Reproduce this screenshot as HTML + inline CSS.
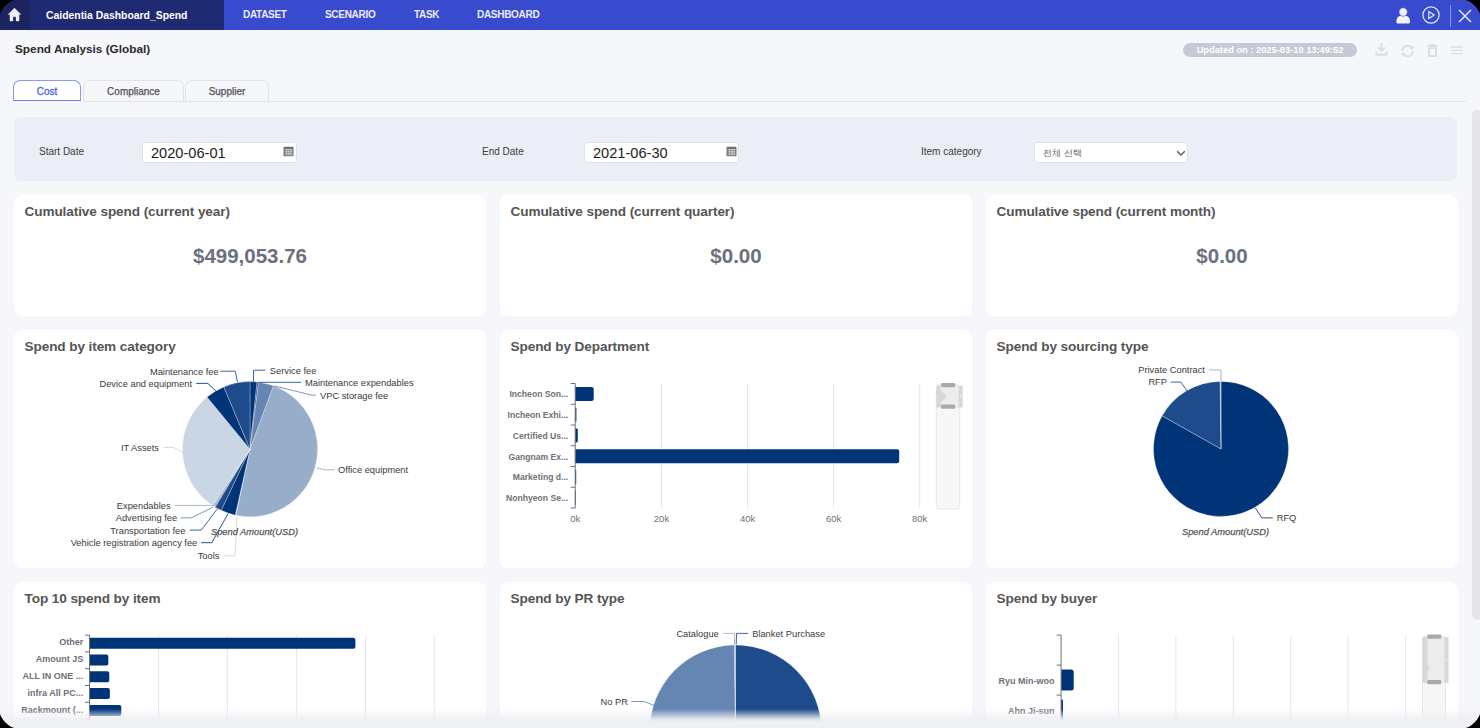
<!DOCTYPE html>
<html><head><meta charset="utf-8">
<style>
*{box-sizing:border-box;margin:0;padding:0}
html,body{width:1480px;height:728px;overflow:hidden;background:#000}
body{font-family:"Liberation Sans",sans-serif}
#app{position:absolute;left:0;top:0;width:1480px;height:728px;overflow:hidden;background:#f6f7fb}
.abs{position:absolute;white-space:nowrap}
#nav{position:absolute;left:0;top:0;width:1480px;height:30px;background:#384bcf}
#navdark{position:absolute;left:0;top:0;width:224px;height:30px;background:#1f2a72}
#navhome{position:absolute;left:0;top:0;width:30px;height:30px;background:#1b2360}
.navi{position:absolute;top:8px;color:#e9ecfb;font-weight:700;font-size:10px;line-height:14px;letter-spacing:-0.3px}
.card{position:absolute;background:#fff;border-radius:8px}
.ctitle{position:absolute;left:10.5px;top:8.5px;font-size:13.6px;letter-spacing:-0.1px;font-weight:700;color:#555;line-height:16px;white-space:nowrap}
.kpi{position:absolute;left:0;width:472px;top:48.5px;text-align:center;font-size:20.5px;font-weight:700;color:#6b707c;line-height:24px}
.tab{position:absolute;top:80px;height:21px;border:1px solid #e2e4ea;border-bottom:none;border-radius:7px 7px 0 0;font-size:10px;color:#505050;text-align:center;line-height:22px;-webkit-text-stroke:0.25px #505050}
.flabel{position:absolute;top:146px;font-size:10px;color:#3c3c3c;line-height:12px}
.finput{position:absolute;top:142px;height:21px;width:155px;background:#fff;border:1px solid #dfe2ea;border-radius:3px}
.fval{position:absolute;left:8px;top:2px;font-size:14.6px;color:#1c1c1c;line-height:17px}
</style></head>
<body>
<div id="app">
  <div id="nav">
    <div id="navdark"></div>
    <div id="navhome"></div>
    <svg class="abs" style="left:0;top:0" width="30" height="30" viewBox="0 0 30 30"><path d="M14.5 8.1 L21 14.6 L19.1 14.6 L19.1 21.1 L16 21.1 L16 16.8 L13 16.8 L13 21.1 L9.9 21.1 L9.9 14.6 L8 14.6 Z" fill="#eeeef3" stroke="#eeeef3" stroke-width="0.3" stroke-linejoin="round"/></svg>
    <div class="abs" style="left:46px;top:9px;color:#fff;font-weight:700;font-size:10.4px;line-height:14px">Caidentia Dashboard_Spend</div>
    <div class="navi" style="left:243px">DATASET</div>
    <div class="navi" style="left:325px">SCENARIO</div>
    <div class="navi" style="left:414px">TASK</div>
    <div class="navi" style="left:477px">DASHBOARD</div>
  </div>
  <div class="abs" style="left:15px;top:42px;font-size:11.8px;font-weight:700;color:#2a2a2a;line-height:15px">Spend Analysis (Global)</div>

  <!-- right nav icons -->
  <svg class="abs" style="left:1396px;top:7px" width="15" height="17" viewBox="0 0 15 17"><path d="M0.4 14.2 C0.4 10.4 3 8.2 7.2 8.2 C11.4 8.2 14 10.4 14 14.2 L14 15 Q14 16.5 12.5 16.5 L1.9 16.5 Q0.4 16.5 0.4 15 Z" fill="#f3f3f7"/><circle cx="7.2" cy="5" r="4.2" fill="#f3f3f7" stroke="#384bcf" stroke-width="0.6"/></svg>
  <svg class="abs" style="left:1422px;top:6px" width="18" height="18" viewBox="0 0 18 18"><circle cx="9" cy="9" r="8.1" fill="none" stroke="#e8eaf8" stroke-width="1.2"/><path d="M6.8 5.4 L12.2 9 L6.8 12.6 Z" fill="none" stroke="#e8eaf8" stroke-width="1.2" stroke-linejoin="round"/></svg>
  <div class="abs" style="left:1450px;top:5px;width:1px;height:22px;background:#8f9be3"></div>
  <svg class="abs" style="left:1458px;top:9px" width="14" height="14" viewBox="0 0 14 14"><path d="M1 1 L13 13 M13 1 L1 13" stroke="#f3f3f8" stroke-width="1.4"/></svg>
  <!-- updated pill -->
  <div class="abs" style="left:1183px;top:43px;width:174px;height:14px;border-radius:7px;background:#c6cad4;color:#fff;font-size:9.3px;font-weight:700;line-height:14px;text-align:center">Updated on : 2025-03-10 13:49:52</div>
  <!-- toolbar icons -->
  <svg class="abs" style="left:1374px;top:42px" width="15" height="15" viewBox="0 0 15 15" fill="none" stroke="#dadde4" stroke-width="2" stroke-linecap="round" stroke-linejoin="round"><path d="M7.5 2 L7.5 8.5 M4.6 6 L7.5 8.9 L10.4 6"/><path d="M2.3 10.2 L2.3 12 Q2.3 12.8 3.1 12.8 L11.9 12.8 Q12.7 12.8 12.7 12 L12.7 10.2"/></svg>
  <svg class="abs" style="left:1400px;top:44px" width="15" height="14" viewBox="0 0 15 14" fill="none" stroke="#dadde4" stroke-width="2"><path d="M2.4 7 A5 5 0 0 1 11.2 3.6 M12.6 7 A5 5 0 0 1 3.8 10.4"/><path d="M13.6 1.2 L13.3 5.6 L9 5 Z M1.4 12.8 L1.7 8.4 L6 9 Z" fill="#dadde4" stroke="none"/></svg>
  <svg class="abs" style="left:1427px;top:44px" width="11" height="13" viewBox="0 0 11 13"><rect x="0.3" y="1" width="10.4" height="1.8" rx="0.5" fill="#dadde4"/><rect x="3.5" y="0" width="4" height="1.4" fill="#dadde4"/><rect x="2" y="4.2" width="7" height="7.8" fill="none" stroke="#dadde4" stroke-width="2"/></svg>
  <svg class="abs" style="left:1451px;top:45px" width="13" height="10" viewBox="0 0 13 10" stroke="#dadde4" stroke-width="1.3"><path d="M0 2 H12 M0 5.3 H12 M0 8.6 H12"/></svg>
  <!-- tabs -->
  <div class="abs" style="left:83px;top:101px;width:1383px;height:1px;background:#e3e5ea"></div>
  <div class="tab" style="left:13px;width:68px;border:1px solid #8a9ae8;border-bottom:1.5px solid #6c80e6;background:#fff;color:#4c63e0;-webkit-text-stroke:0.3px #4c63e0;height:21px;line-height:21px">Cost</div>
  <div class="tab" style="left:83px;width:101px">Compliance</div>
  <div class="tab" style="left:185px;width:84px">Supplier</div>
  <!-- scrollbar -->
  <div class="abs" style="left:1472px;top:110px;width:10px;height:510px;border-radius:5px;background:#e6e6e8"></div>
  <!-- filter panel -->
  <div class="abs" style="left:14px;top:117px;width:1443px;height:64px;border-radius:7px;background:#ebeef7"></div>
  <div class="flabel" style="left:39px">Start Date</div>
  <div class="finput" style="left:142px"><div class="fval">2020-06-01</div>
    <svg class="abs" style="left:140px;top:3px" width="11" height="11" viewBox="0 0 11 11"><rect x="0.5" y="0.8" width="10" height="9.5" rx="1" fill="#6f7075"/><path d="M1.5 3.6 H9.5 M1.5 5.8 H9.5 M1.5 8 H9.5 M3.7 3 V9.6 M5.9 3 V9.6 M8 3 V9.6" stroke="#e8e8ec" stroke-width="0.7"/></svg></div>
  <div class="flabel" style="left:482px">End Date</div>
  <div class="finput" style="left:584px"><div class="fval">2021-06-30</div>
    <svg class="abs" style="left:141px;top:3px" width="11" height="11" viewBox="0 0 11 11"><rect x="0.5" y="0.8" width="10" height="9.5" rx="1" fill="#6f7075"/><path d="M1.5 3.6 H9.5 M1.5 5.8 H9.5 M1.5 8 H9.5 M3.7 3 V9.6 M5.9 3 V9.6 M8 3 V9.6" stroke="#e8e8ec" stroke-width="0.7"/></svg></div>
  <div class="flabel" style="left:921px">Item category</div>
  <div class="finput" style="left:1034px;width:154px;height:21px"><div class="abs" style="left:8px;top:3.5px;font-size:9.2px;color:#666;line-height:12px">전체 선택</div>
    <svg class="abs" style="left:141px;top:6px" width="10" height="8" viewBox="0 0 10 8"><path d="M1.2 2.2 L5 6 L8.8 2.2" fill="none" stroke="#555" stroke-width="1.3"/></svg></div>
  <!-- KPI cards -->
  <div class="card" style="left:14px;top:195px;width:472px;height:121px"><div class="ctitle">Cumulative spend (current year)</div><div class="kpi">$499,053.76</div></div>
  <div class="card" style="left:500px;top:195px;width:472px;height:121px"><div class="ctitle">Cumulative spend (current quarter)</div><div class="kpi">$0.00</div></div>
  <div class="card" style="left:986px;top:195px;width:472px;height:121px"><div class="ctitle">Cumulative spend (current month)</div><div class="kpi">$0.00</div></div>
  <!-- chart cards -->
  <div class="card" id="c1" style="left:14px;top:330px;width:472px;height:238px"><div class="ctitle">Spend by item category</div></div>
  <div class="card" id="c2" style="left:500px;top:330px;width:472px;height:238px"><div class="ctitle">Spend by Department</div></div>
  <div class="card" id="c3" style="left:986px;top:330px;width:472px;height:238px"><div class="ctitle">Spend by sourcing type</div></div>
  <div class="card" id="c4" style="left:14px;top:582px;width:472px;height:238px"><div class="ctitle">Top 10 spend by item</div></div>
  <div class="card" id="c5" style="left:500px;top:582px;width:472px;height:238px"><div class="ctitle">Spend by PR type</div></div>
  <div class="card" id="c6" style="left:986px;top:582px;width:472px;height:238px"><div class="ctitle">Spend by buyer</div></div>
  <!--CHARTS--><svg class="abs" style="left:0;top:0" width="1480" height="728" viewBox="0 0 1480 728" font-family="Liberation Sans, sans-serif">
<path d="M250,449.2 L250.00,381.60 A67.6,67.6 0 0 1 257.07,381.97 Z" fill="#003478" stroke="#fff" stroke-width="0.35" stroke-opacity="0.8" stroke-linejoin="round"/>
<path d="M250,449.2 L257.07,381.97 A67.6,67.6 0 0 1 258.59,382.15 Z" fill="#1d4b8b" stroke="#fff" stroke-width="0.35" stroke-opacity="0.8" stroke-linejoin="round"/>
<path d="M250,449.2 L258.59,382.15 A67.6,67.6 0 0 1 273.56,385.84 Z" fill="#6585b2" stroke="#fff" stroke-width="0.35" stroke-opacity="0.8" stroke-linejoin="round"/>
<path d="M250,449.2 L273.56,385.84 A67.6,67.6 0 0 1 235.83,515.30 Z" fill="#97adc9" stroke="#fff" stroke-width="0.35" stroke-opacity="0.8" stroke-linejoin="round"/>
<path d="M250,449.2 L235.83,515.30 A67.6,67.6 0 0 1 235.25,515.17 Z" fill="#cbd6e4" stroke="#fff" stroke-width="0.35" stroke-opacity="0.8" stroke-linejoin="round"/>
<path d="M250,449.2 L235.25,515.17 A67.6,67.6 0 0 1 221.22,510.37 Z" fill="#003478" stroke="#fff" stroke-width="0.35" stroke-opacity="0.8" stroke-linejoin="round"/>
<path d="M250,449.2 L221.22,510.37 A67.6,67.6 0 0 1 215.18,507.14 Z" fill="#1d4b8b" stroke="#fff" stroke-width="0.35" stroke-opacity="0.8" stroke-linejoin="round"/>
<path d="M250,449.2 L215.18,507.14 A67.6,67.6 0 0 1 214.18,506.53 Z" fill="#6585b2" stroke="#fff" stroke-width="0.35" stroke-opacity="0.8" stroke-linejoin="round"/>
<path d="M250,449.2 L214.18,506.53 A67.6,67.6 0 0 1 212.69,505.57 Z" fill="#97adc9" stroke="#fff" stroke-width="0.35" stroke-opacity="0.8" stroke-linejoin="round"/>
<path d="M250,449.2 L212.69,505.57 A67.6,67.6 0 0 1 207.00,397.04 Z" fill="#cbd6e4" stroke="#fff" stroke-width="0.35" stroke-opacity="0.8" stroke-linejoin="round"/>
<path d="M250,449.2 L207.00,397.04 A67.6,67.6 0 0 1 223.80,386.88 Z" fill="#003478" stroke="#fff" stroke-width="0.35" stroke-opacity="0.8" stroke-linejoin="round"/>
<path d="M250,449.2 L223.80,386.88 A67.6,67.6 0 0 1 250.00,381.60 Z" fill="#1d4b8b" stroke="#fff" stroke-width="0.35" stroke-opacity="0.8" stroke-linejoin="round"/>
<path d="M253.5,381.5 L253.5,370.2 L265.3,370.2" fill="none" stroke="#1d4b8b" stroke-width="1" stroke-opacity="0.85"/>
<text x="269.8" y="370.7" font-size="9.3" fill="#3a3a3a" font-weight="400" text-anchor="start" dominant-baseline="central" >Service fee</text>
<path d="M258,382.3 L301,382.3" fill="none" stroke="#1d4b8b" stroke-width="1" stroke-opacity="0.85"/>
<text x="305" y="382.8" font-size="9.3" fill="#3a3a3a" font-weight="400" text-anchor="start" dominant-baseline="central" >Maintenance expendables</text>
<path d="M274,385.8 L312,395.2 L315.8,395.2" fill="none" stroke="#6585b2" stroke-width="1" stroke-opacity="0.85"/>
<text x="320" y="395.7" font-size="9.3" fill="#3a3a3a" font-weight="400" text-anchor="start" dominant-baseline="central" >VPC storage fee</text>
<path d="M316.6,467.8 L324.9,469.8 L334.8,469.8" fill="none" stroke="#97adc9" stroke-width="1" stroke-opacity="0.85"/>
<text x="338" y="470.3" font-size="9.3" fill="#3a3a3a" font-weight="400" text-anchor="start" dominant-baseline="central" >Office equipment</text>
<path d="M236.8,516.3 L235.2,555.8 L223.6,555.8" fill="none" stroke="#cbd6e4" stroke-width="1" stroke-opacity="0.85"/>
<text x="219.4" y="556.3" font-size="9.3" fill="#3a3a3a" font-weight="400" text-anchor="end" dominant-baseline="central" >Tools</text>
<path d="M228,513.7 L211.8,542.7 L201.2,542.7" fill="none" stroke="#003478" stroke-width="1" stroke-opacity="0.85"/>
<text x="197.3" y="543.2" font-size="9.3" fill="#3a3a3a" font-weight="400" text-anchor="end" dominant-baseline="central" >Vehicle registration agency fee</text>
<path d="M217.2,509 L201.2,530.1 L189.7,530.1" fill="none" stroke="#1d4b8b" stroke-width="1" stroke-opacity="0.85"/>
<text x="185.4" y="530.6" font-size="9.3" fill="#3a3a3a" font-weight="400" text-anchor="end" dominant-baseline="central" >Transportation fee</text>
<path d="M213.5,506.9 L191.3,517.9 L180.8,517.9" fill="none" stroke="#6585b2" stroke-width="1" stroke-opacity="0.85"/>
<text x="177.2" y="518.4" font-size="9.3" fill="#3a3a3a" font-weight="400" text-anchor="end" dominant-baseline="central" >Advertising fee</text>
<path d="M212.9,505.4 L174.9,505.4" fill="none" stroke="#97adc9" stroke-width="1" stroke-opacity="0.85"/>
<text x="170.6" y="505.9" font-size="9.3" fill="#3a3a3a" font-weight="400" text-anchor="end" dominant-baseline="central" >Expendables</text>
<path d="M183,452.6 L173.2,447.4 L163.3,447.4" fill="none" stroke="#cbd6e4" stroke-width="1" stroke-opacity="0.85"/>
<text x="159" y="447.9" font-size="9.3" fill="#3a3a3a" font-weight="400" text-anchor="end" dominant-baseline="central" >IT Assets</text>
<path d="M216,391 L207.8,383.4 L196.3,383.4" fill="none" stroke="#003478" stroke-width="1" stroke-opacity="0.85"/>
<text x="192" y="383.9" font-size="9.3" fill="#3a3a3a" font-weight="400" text-anchor="end" dominant-baseline="central" >Device and equipment</text>
<path d="M237.5,381.8 L235.2,371.2 L220.3,371.2" fill="none" stroke="#1d4b8b" stroke-width="1" stroke-opacity="0.85"/>
<text x="218.7" y="371.7" font-size="9.3" fill="#3a3a3a" font-weight="400" text-anchor="end" dominant-baseline="central" >Maintenance fee</text>
<text x="254.5" y="532.4" font-size="9.3" fill="#555" font-weight="400" text-anchor="middle" dominant-baseline="central" font-style="italic" stroke="#555" stroke-width="0.25">Spend Amount(USD)</text>
<path d="M1221,448.9 L1221.00,381.40 A67.5,67.5 0 1 1 1162.14,415.87 Z" fill="#003478" stroke="#fff" stroke-width="0.35" stroke-opacity="0.8" stroke-linejoin="round"/>
<path d="M1221,448.9 L1162.14,415.87 A67.5,67.5 0 0 1 1220.18,381.41 Z" fill="#1d4b8b" stroke="#fff" stroke-width="0.35" stroke-opacity="0.8" stroke-linejoin="round"/>
<path d="M1221,448.9 L1220.18,381.41 A67.5,67.5 0 0 1 1221.00,381.40 Z" fill="#97adc9" stroke="#fff" stroke-width="0.35" stroke-opacity="0.8" stroke-linejoin="round"/>
<path d="M1221,381 L1221,369.9 L1209.1,369.9" fill="none" stroke="#97adc9" stroke-width="1" stroke-opacity="0.85"/>
<text x="1204.9" y="369.9" font-size="9.3" fill="#3a3a3a" font-weight="400" text-anchor="end" dominant-baseline="central" >Private Contract</text>
<path d="M1187,391 L1181,382.1 L1170.6,382.1" fill="none" stroke="#1d4b8b" stroke-width="1" stroke-opacity="0.85"/>
<text x="1167" y="382.1" font-size="9.3" fill="#3a3a3a" font-weight="400" text-anchor="end" dominant-baseline="central" >RFP</text>
<path d="M1255.3,508 L1261.9,517.9 L1272.8,517.9" fill="none" stroke="#003478" stroke-width="1" stroke-opacity="0.85"/>
<text x="1276.7" y="517.9" font-size="9.3" fill="#3a3a3a" font-weight="400" text-anchor="start" dominant-baseline="central" >RFQ</text>
<text x="1225.5" y="532.4" font-size="9.3" fill="#555" font-weight="400" text-anchor="middle" dominant-baseline="central" font-style="italic" stroke="#555" stroke-width="0.25">Spend Amount(USD)</text>
<path d="M735.5,731 L735.50,645.00 A86,86 0 0 1 735.50,817.00 Z" fill="#1d4b8b" stroke="#fff" stroke-width="0.35" stroke-opacity="0.8" stroke-linejoin="round"/>
<path d="M735.5,731 L735.50,817.00 A86,86 0 0 1 734.30,645.01 Z" fill="#6585b2" stroke="#fff" stroke-width="0.35" stroke-opacity="0.8" stroke-linejoin="round"/>
<path d="M735.5,731 L734.30,645.01 A86,86 0 0 1 735.50,645.00 Z" fill="#97adc9" stroke="#fff" stroke-width="0.35" stroke-opacity="0.8" stroke-linejoin="round"/>
<path d="M734.6,644.6 L734.4,633.4 L723,633.4" fill="none" stroke="#97adc9" stroke-width="1" stroke-opacity="0.85"/>
<text x="718.8" y="634.1" font-size="9.3" fill="#3a3a3a" font-weight="400" text-anchor="end" dominant-baseline="central" >Catalogue</text>
<path d="M736.2,644.6 L736.6,633.4 L748,633.4" fill="none" stroke="#1d4b8b" stroke-width="1" stroke-opacity="0.85"/>
<text x="752.2" y="634.1" font-size="9.3" fill="#3a3a3a" font-weight="400" text-anchor="start" dominant-baseline="central" >Blanket Purchase</text>
<path d="M653.9,705.4 L644.2,701.5 L631.2,701.5" fill="none" stroke="#6585b2" stroke-width="1" stroke-opacity="0.85"/>
<text x="627.9" y="702.2" font-size="9.3" fill="#3a3a3a" font-weight="400" text-anchor="end" dominant-baseline="central" >No PR</text>
<line x1="661.5" y1="383.5" x2="661.5" y2="508" stroke="#e0e6f1" stroke-width="1"/>
<line x1="747.6" y1="383.5" x2="747.6" y2="508" stroke="#e0e6f1" stroke-width="1"/>
<line x1="833.6" y1="383.5" x2="833.6" y2="508" stroke="#e0e6f1" stroke-width="1"/>
<line x1="919.7" y1="383.5" x2="919.7" y2="508" stroke="#e0e6f1" stroke-width="1"/>
<path d="M575.2,386.875 H591.7 Q593.7,386.875 593.7,388.875 V398.875 Q593.7,400.875 591.7,400.875 H575.2 Z" fill="#003478"/>
<text x="568.2" y="394.475" font-size="8.6" fill="#6e7079" font-weight="700" text-anchor="end" dominant-baseline="central" >Incheon Son...</text>
<path d="M575.2,407.625 H575.8 Q576.4,407.625 576.4,408.22499999999997 V421.02500000000003 Q576.4,421.625 575.8,421.625 H575.2 Z" fill="#003478"/>
<text x="568.2" y="415.225" font-size="8.6" fill="#6e7079" font-weight="700" text-anchor="end" dominant-baseline="central" >Incheon Exhi...</text>
<path d="M575.2,428.375 H576.5 Q577.8,428.375 577.8,429.67499999999995 V441.07500000000005 Q577.8,442.375 576.5,442.375 H575.2 Z" fill="#003478"/>
<text x="568.2" y="435.975" font-size="8.6" fill="#6e7079" font-weight="700" text-anchor="end" dominant-baseline="central" >Certified Us...</text>
<path d="M575.2,449.125 H897.2 Q899.2,449.125 899.2,451.125 V461.125 Q899.2,463.125 897.2,463.125 H575.2 Z" fill="#003478"/>
<text x="568.2" y="456.725" font-size="8.6" fill="#6e7079" font-weight="700" text-anchor="end" dominant-baseline="central" >Gangnam Ex...</text>
<path d="M575.2,469.875 H575.7 Q576.2,469.875 576.2,470.375 V483.375 Q576.2,483.875 575.7,483.875 H575.2 Z" fill="#003478"/>
<text x="568.2" y="477.475" font-size="8.6" fill="#6e7079" font-weight="700" text-anchor="end" dominant-baseline="central" >Marketing d...</text>
<path d="M575.2,490.625 H575.55 Q575.9,490.625 575.9,490.97499999999997 V504.27500000000003 Q575.9,504.625 575.55,504.625 H575.2 Z" fill="#003478"/>
<text x="568.2" y="498.225" font-size="8.6" fill="#6e7079" font-weight="700" text-anchor="end" dominant-baseline="central" >Nonhyeon Se...</text>
<line x1="575.2" y1="383.5" x2="575.2" y2="508" stroke="#6e7079" stroke-width="1"/>
<line x1="570.7" y1="383.5" x2="575.2" y2="383.5" stroke="#6e7079" stroke-width="1"/>
<line x1="570.7" y1="404.25" x2="575.2" y2="404.25" stroke="#6e7079" stroke-width="1"/>
<line x1="570.7" y1="425.0" x2="575.2" y2="425.0" stroke="#6e7079" stroke-width="1"/>
<line x1="570.7" y1="445.75" x2="575.2" y2="445.75" stroke="#6e7079" stroke-width="1"/>
<line x1="570.7" y1="466.5" x2="575.2" y2="466.5" stroke="#6e7079" stroke-width="1"/>
<line x1="570.7" y1="487.25" x2="575.2" y2="487.25" stroke="#6e7079" stroke-width="1"/>
<line x1="570.7" y1="508.0" x2="575.2" y2="508.0" stroke="#6e7079" stroke-width="1"/>
<text x="575.2" y="518.2" font-size="9.5" fill="#6e7079" font-weight="400" text-anchor="middle" dominant-baseline="central" >0k</text>
<text x="661.5" y="518.2" font-size="9.5" fill="#6e7079" font-weight="400" text-anchor="middle" dominant-baseline="central" >20k</text>
<text x="747.6" y="518.2" font-size="9.5" fill="#6e7079" font-weight="400" text-anchor="middle" dominant-baseline="central" >40k</text>
<text x="833.6" y="518.2" font-size="9.5" fill="#6e7079" font-weight="400" text-anchor="middle" dominant-baseline="central" >60k</text>
<text x="919.7" y="518.2" font-size="9.5" fill="#6e7079" font-weight="400" text-anchor="middle" dominant-baseline="central" >80k</text>
<rect x="936.3" y="384.5" width="23.4" height="124.5" rx="3" fill="#f7f7f7" stroke="#e2e2e2" stroke-width="0.8"/>
<rect x="936.3" y="385.5" width="26.4" height="22" fill="#d7d7d7"/>
<path d="M940.8,385.5 H958.6999999999999 V407.5 H940.8 L940.8,402.5 L946.8,396.5 L940.8,390.5 Z" fill="#ececec"/>
<circle cx="960.6999999999999" cy="395.5" r="0.5" fill="#fff"/><circle cx="960.6999999999999" cy="397.5" r="0.5" fill="#fff"/>
<rect x="941.0999999999999" y="383.1" width="14" height="4.2" rx="1.2" fill="#a9a9a9"/>
<rect x="941.0999999999999" y="404.5" width="14" height="4.2" rx="1.2" fill="#a9a9a9"/>
<line x1="158.6" y1="635.1" x2="158.6" y2="728" stroke="#e0e6f1" stroke-width="1"/>
<line x1="227.3" y1="635.1" x2="227.3" y2="728" stroke="#e0e6f1" stroke-width="1"/>
<line x1="296.4" y1="635.1" x2="296.4" y2="728" stroke="#e0e6f1" stroke-width="1"/>
<line x1="365.5" y1="635.1" x2="365.5" y2="728" stroke="#e0e6f1" stroke-width="1"/>
<line x1="434.3" y1="635.1" x2="434.3" y2="728" stroke="#e0e6f1" stroke-width="1"/>
<path d="M89.5,637.7 H353.4 Q355.4,637.7 355.4,639.7 V646.7 Q355.4,648.7 353.4,648.7 H89.5 Z" fill="#003478"/>
<text x="83.3" y="642.3000000000001" font-size="9" fill="#6e7079" font-weight="700" text-anchor="end" dominant-baseline="central" >Other</text>
<path d="M89.5,654.5000000000001 H106.3 Q108.3,654.5000000000001 108.3,656.5000000000001 V663.5000000000001 Q108.3,665.5000000000001 106.3,665.5000000000001 H89.5 Z" fill="#003478"/>
<text x="83.3" y="659.1000000000001" font-size="9" fill="#6e7079" font-weight="700" text-anchor="end" dominant-baseline="central" >Amount JS</text>
<path d="M89.5,671.3000000000001 H107.3 Q109.3,671.3000000000001 109.3,673.3000000000001 V680.3000000000001 Q109.3,682.3000000000001 107.3,682.3000000000001 H89.5 Z" fill="#003478"/>
<text x="83.3" y="675.9000000000001" font-size="9" fill="#6e7079" font-weight="700" text-anchor="end" dominant-baseline="central" >ALL IN ONE ...</text>
<path d="M89.5,688.1 H107.9 Q109.9,688.1 109.9,690.1 V697.1 Q109.9,699.1 107.9,699.1 H89.5 Z" fill="#003478"/>
<text x="83.3" y="692.7" font-size="9" fill="#6e7079" font-weight="700" text-anchor="end" dominant-baseline="central" >infra All PC...</text>
<path d="M89.5,704.9000000000001 H119.3 Q121.3,704.9000000000001 121.3,706.9000000000001 V713.9000000000001 Q121.3,715.9000000000001 119.3,715.9000000000001 H89.5 Z" fill="#003478"/>
<text x="83.3" y="709.5000000000001" font-size="9" fill="#6e7079" font-weight="700" text-anchor="end" dominant-baseline="central" >Rackmount (...</text>
<path d="M89.5,721.7 H108 Q110,721.7 110,723.7 V730.7 Q110,732.7 108,732.7 H89.5 Z" fill="#003478"/>
<path d="M89.5,738.5000000000001 H108 Q110,738.5000000000001 110,740.5000000000001 V747.5000000000001 Q110,749.5000000000001 108,749.5000000000001 H89.5 Z" fill="#003478"/>
<line x1="89.5" y1="635.1" x2="89.5" y2="728" stroke="#6e7079" stroke-width="1"/>
<line x1="85.0" y1="635.1" x2="89.5" y2="635.1" stroke="#6e7079" stroke-width="1"/>
<line x1="85.0" y1="651.9" x2="89.5" y2="651.9" stroke="#6e7079" stroke-width="1"/>
<line x1="85.0" y1="668.7" x2="89.5" y2="668.7" stroke="#6e7079" stroke-width="1"/>
<line x1="85.0" y1="685.5" x2="89.5" y2="685.5" stroke="#6e7079" stroke-width="1"/>
<line x1="85.0" y1="702.3000000000001" x2="89.5" y2="702.3000000000001" stroke="#6e7079" stroke-width="1"/>
<line x1="85.0" y1="719.1" x2="89.5" y2="719.1" stroke="#6e7079" stroke-width="1"/>
<line x1="85.0" y1="735.9000000000001" x2="89.5" y2="735.9000000000001" stroke="#6e7079" stroke-width="1"/>
<line x1="1118.5" y1="635.1" x2="1118.5" y2="728" stroke="#e0e6f1" stroke-width="1"/>
<line x1="1175.9" y1="635.1" x2="1175.9" y2="728" stroke="#e0e6f1" stroke-width="1"/>
<line x1="1233.3" y1="635.1" x2="1233.3" y2="728" stroke="#e0e6f1" stroke-width="1"/>
<line x1="1290.7" y1="635.1" x2="1290.7" y2="728" stroke="#e0e6f1" stroke-width="1"/>
<line x1="1348.1" y1="635.1" x2="1348.1" y2="728" stroke="#e0e6f1" stroke-width="1"/>
<line x1="1405.6" y1="635.1" x2="1405.6" y2="728" stroke="#e0e6f1" stroke-width="1"/>
<path d="M1061.1,669.6 H1071.2 Q1073.7,669.6 1073.7,672.1 V688.1 Q1073.7,690.6 1071.2,690.6 H1061.1 Z" fill="#003478"/>
<text x="1054.6" y="680.9" font-size="9" fill="#6e7079" font-weight="700" text-anchor="end" dominant-baseline="central" >Ryu Min-woo</text>
<path d="M1061.1,699.6 H1062.05 Q1063,699.6 1063,700.5500000000001 V719.65 Q1063,720.6 1062.05,720.6 H1061.1 Z" fill="#003478"/>
<text x="1054.6" y="710.9" font-size="9" fill="#6e7079" font-weight="700" text-anchor="end" dominant-baseline="central" >Ahn Ji-sun</text>
<line x1="1061.1" y1="635.1" x2="1061.1" y2="728" stroke="#6e7079" stroke-width="1"/>
<line x1="1056.6" y1="635.1" x2="1061.1" y2="635.1" stroke="#6e7079" stroke-width="1"/>
<line x1="1056.6" y1="665.1" x2="1061.1" y2="665.1" stroke="#6e7079" stroke-width="1"/>
<line x1="1056.6" y1="695.1" x2="1061.1" y2="695.1" stroke="#6e7079" stroke-width="1"/>
<line x1="1056.6" y1="725.1" x2="1061.1" y2="725.1" stroke="#6e7079" stroke-width="1"/>
<rect x="1422.5" y="636" width="23" height="100" rx="3" fill="#f7f7f7" stroke="#e2e2e2" stroke-width="0.8"/>
<rect x="1422.5" y="637" width="26" height="46" fill="#d7d7d7"/>
<path d="M1427.5,637 H1444.5 V683 H1427.5 L1427.5,672.0 L1429.5,668.0 L1427.5,664.0 Z" fill="#ececec"/>
<circle cx="1446.5" cy="659.0" r="0.5" fill="#fff"/><circle cx="1446.5" cy="661.0" r="0.5" fill="#fff"/>
<rect x="1427.3" y="634.6" width="14" height="4.2" rx="1.2" fill="#a9a9a9"/>
<rect x="1427.3" y="680" width="14" height="4.2" rx="1.2" fill="#a9a9a9"/>
</svg><!--/CHARTS-->
  <!-- bottom fade -->
  <div class="abs" style="left:0;top:709px;width:1480px;height:19px;background:linear-gradient(to bottom,rgba(239,240,244,0) 0px,rgba(239,240,244,0.55) 6px,rgba(239,240,244,0.9) 10px,rgba(239,240,244,1) 13px,#eff0f4 19px)"></div>

  <svg class="abs" style="left:0;top:0" width="1480" height="728" viewBox="0 0 1480 728">
    <path d="M0,0 L0.00,14.50 L0.04,14.16 L0.17,13.63 L0.38,12.98 L0.68,12.25 L1.05,11.47 L1.50,10.65 L2.02,9.79 L2.61,8.93 L3.26,8.05 L3.96,7.19 L4.72,6.34 L5.51,5.51 L6.34,4.72 L7.19,3.96 L8.05,3.26 L8.93,2.61 L9.79,2.02 L10.65,1.50 L11.47,1.05 L12.25,0.68 L12.98,0.38 L13.63,0.17 L14.16,0.04 L14.50,0.00 Z" fill="#000"/>
    <path d="M0,0 L0.00,14.50 L0.04,14.16 L0.17,13.63 L0.38,12.98 L0.68,12.25 L1.05,11.47 L1.50,10.65 L2.02,9.79 L2.61,8.93 L3.26,8.05 L3.96,7.19 L4.72,6.34 L5.51,5.51 L6.34,4.72 L7.19,3.96 L8.05,3.26 L8.93,2.61 L9.79,2.02 L10.65,1.50 L11.47,1.05 L12.25,0.68 L12.98,0.38 L13.63,0.17 L14.16,0.04 L14.50,0.00 Z" fill="#000" transform="translate(1480,0) scale(-1,1)"/>
    <path d="M0,0 L0.00,14.50 L0.04,14.16 L0.17,13.63 L0.38,12.98 L0.68,12.25 L1.05,11.47 L1.50,10.65 L2.02,9.79 L2.61,8.93 L3.26,8.05 L3.96,7.19 L4.72,6.34 L5.51,5.51 L6.34,4.72 L7.19,3.96 L8.05,3.26 L8.93,2.61 L9.79,2.02 L10.65,1.50 L11.47,1.05 L12.25,0.68 L12.98,0.38 L13.63,0.17 L14.16,0.04 L14.50,0.00 Z" fill="#000" transform="translate(0,728) scale(1,-1)"/>
    <path d="M0,0 L0.00,14.50 L0.04,14.16 L0.17,13.63 L0.38,12.98 L0.68,12.25 L1.05,11.47 L1.50,10.65 L2.02,9.79 L2.61,8.93 L3.26,8.05 L3.96,7.19 L4.72,6.34 L5.51,5.51 L6.34,4.72 L7.19,3.96 L8.05,3.26 L8.93,2.61 L9.79,2.02 L10.65,1.50 L11.47,1.05 L12.25,0.68 L12.98,0.38 L13.63,0.17 L14.16,0.04 L14.50,0.00 Z" fill="#000" transform="translate(1480,728) scale(-1,-1)"/>
  </svg>
</div>
</body></html>
